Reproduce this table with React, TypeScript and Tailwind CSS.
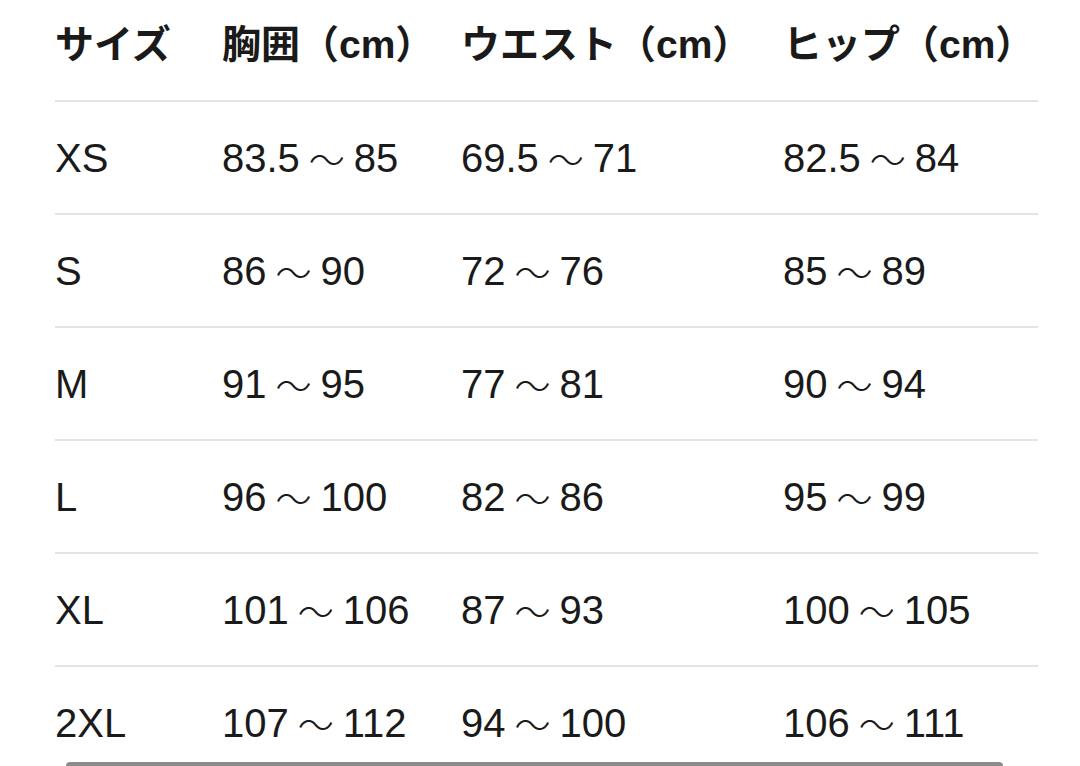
const rows = [
  { size: "XS", bust: "83.5", bustTo: "85", waist: "69.5", waistTo: "71", hip: "82.5", hipTo: "84" },
  { size: "S", bust: "86", bustTo: "90", waist: "72", waistTo: "76", hip: "85", hipTo: "89" },
  { size: "M", bust: "91", bustTo: "95", waist: "77", waistTo: "81", hip: "90", hipTo: "94" },
  { size: "L", bust: "96", bustTo: "100", waist: "82", waistTo: "86", hip: "95", hipTo: "99" },
  { size: "XL", bust: "101", bustTo: "106", waist: "87", waistTo: "93", hip: "100", hipTo: "105" },
  { size: "2XL", bust: "107", bustTo: "112", waist: "94", waistTo: "100", hip: "106", hipTo: "111" },
];

function Range({ from, to }: { from: string; to: string }) {
  return (
    <span className="flex items-center">
      <span>{from}</span>
      <span
        className="inline-block w-[54px] text-center text-[36px] font-light"
        style={{ fontFamily: '"Noto Sans CJK JP", sans-serif' }}
      >
        〜
      </span>
      <span>{to}</span>
    </span>
  );
}

const grid = "grid grid-cols-[167px_239px_322px_1fr]";

export default function App() {
  return (
    <div
      className="relative h-[766px] w-[1080px] overflow-hidden bg-white text-[#1a1a1a]"
      style={{ fontFamily: '"Liberation Sans", "Noto Sans CJK JP", sans-serif' }}
    >
      <div className="pl-[55px] pr-[42px]">
        <div className={`${grid} h-[102px] border-b-2 border-[#e4e4e4] pt-[24px] text-[39px] font-bold leading-[42px]`}>
          <div>サイズ</div>
          <div>胸囲（cm）</div>
          <div>ウエスト（cm）</div>
          <div>ヒップ（cm）</div>
        </div>
        {rows.map((r) => (
          <div
            key={r.size}
            className={`${grid} h-[113px] items-center border-b-2 border-[#e4e4e4] text-[40px] leading-[42px]`}
          >
            <div>{r.size}</div>
            <Range from={r.bust} to={r.bustTo} />
            <Range from={r.waist} to={r.waistTo} />
            <Range from={r.hip} to={r.hipTo} />
          </div>
        ))}
      </div>
      <div className="absolute bottom-0 left-[66px] h-[4px] w-[937px] rounded-t-sm bg-[#8c8c8c]" />
    </div>
  );
}
